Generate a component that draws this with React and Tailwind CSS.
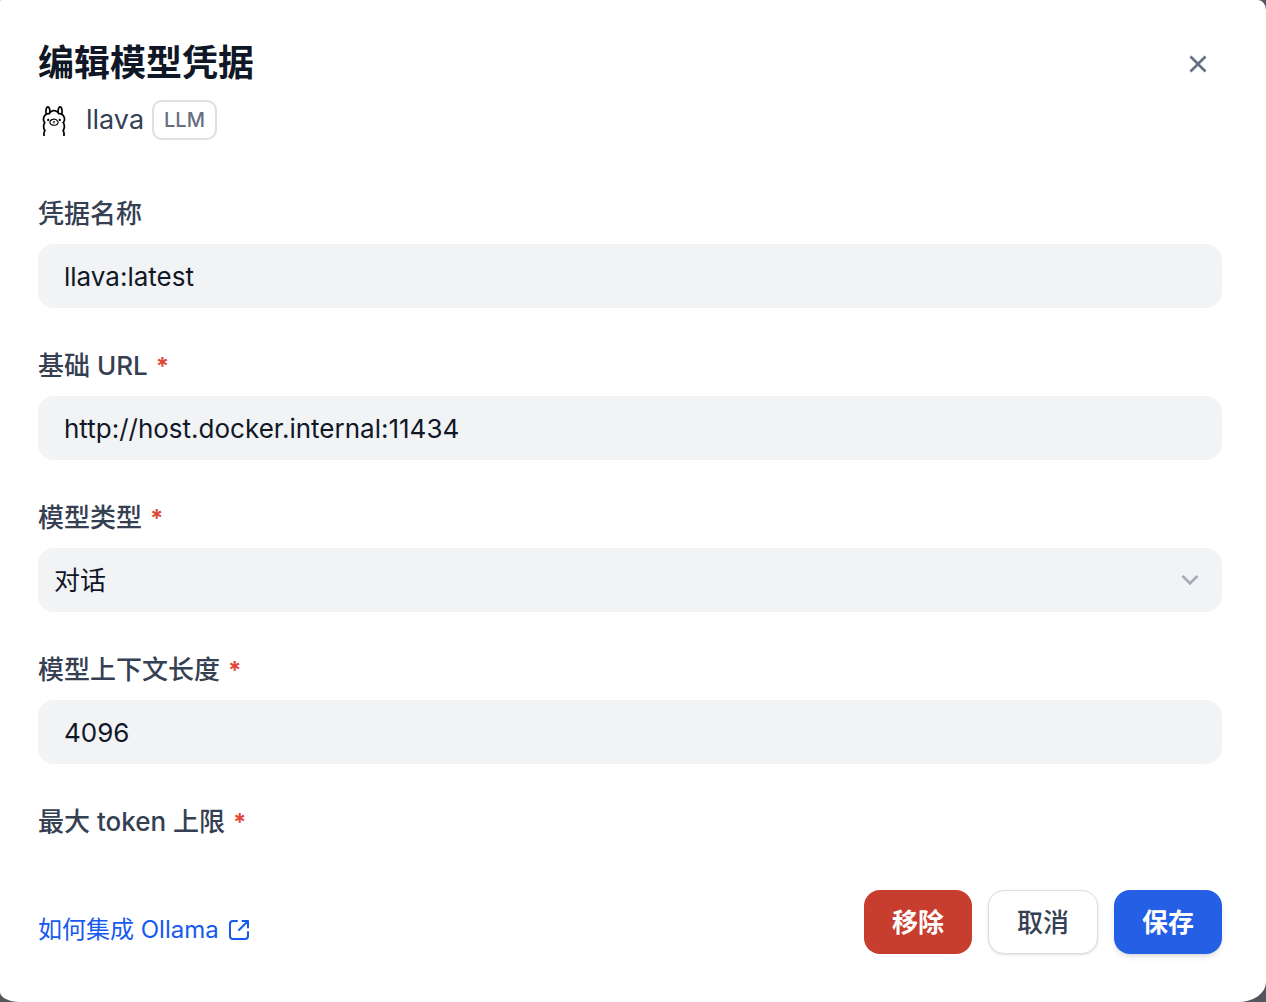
import React from 'react';
import { SiOllama } from 'react-icons/si';
import { RiCloseLine, RiArrowDownSLine } from 'react-icons/ri';

const inputClass =
  'h-16 w-full rounded-2xl bg-[#f2f3f5] text-[26px] text-[#101828] outline-none';

function RequiredMark() {
  return <span className="ml-2 text-[24px] font-bold text-[#e0483a]">*</span>;
}

function Field({ id, label, required, children }) {
  return (
    <div className="flex flex-col gap-2.5">
      <label htmlFor={id} className="h-10 text-[26px] leading-10 font-medium text-[#354052]">
        {label}
        {required && <RequiredMark />}
      </label>
      {children}
    </div>
  );
}

function ExternalIcon() {
  return (
    <svg viewBox="0 0 24 24" className="size-6" fill="none" stroke="currentColor" strokeWidth="2" strokeLinecap="round" strokeLinejoin="round" aria-hidden="true">
      <path d="M10 3H6a3 3 0 0 0-3 3v12a3 3 0 0 0 3 3h12a3 3 0 0 0 3-3v-4" />
      <path d="M15.500 3H21v6.500M21 3l-9 9" />
    </svg>
  );
}

export default function App() {
  return (
    <div className="min-h-screen overflow-hidden bg-[#54565e] font-['Inter','Noto_Sans_CJK_SC',sans-serif]">
      <main className="flex min-h-screen flex-col bg-white pr-11 pl-[38px] [border-radius:1px_8px_28px_20px/1px_10px_20px_10px]">
        <header className="flex items-start justify-between pt-10">
          <div>
            <h1 className="h-12 text-[36px] leading-[46px] font-bold text-[#101828]">编辑模型凭据</h1>
            <div className="mt-3 flex h-10 items-center">
              <span className="flex size-8 items-end justify-center">
                <SiOllama className="size-[30px] text-black" />
              </span>
              <span className="ml-4 text-[27px] leading-10 text-[#354052]">llava</span>
              <span className="ml-2 flex h-10 items-center rounded-[10px] border-2 border-[#dedfe1] px-[10px] text-[20px] font-medium text-[#676f83]">LLM</span>
            </div>
          </div>
          <button type="button" aria-label="关闭" className="mt-1 mr-1 flex size-10 items-center justify-center text-[#676f83]">
            <RiCloseLine className="size-8" />
          </button>
        </header>

        <form className="mt-[54px] flex flex-col gap-[38px]">
          <Field id="name" label="凭据名称">
            <input id="name" type="text" defaultValue="llava:latest" className={`${inputClass} px-[26px]`} />
          </Field>
          <Field id="url" label="基础 URL" required>
            <input id="url" type="text" defaultValue="http://host.docker.internal:11434" className={`${inputClass} px-[26px]`} />
          </Field>
          <Field id="type" label="模型类型" required>
            <div className="relative">
              <select id="type" className={`${inputClass} appearance-none px-4`}>
                <option>对话</option>
              </select>
              <RiArrowDownSLine className="pointer-events-none absolute top-4 right-4 size-8 text-[#a5abb6]" />
            </div>
          </Field>
          <Field id="context" label="模型上下文长度" required>
            <input id="context" type="text" defaultValue="4096" className={`${inputClass} px-[26px]`} />
          </Field>
          <div className="h-10 text-[26px] leading-10 font-medium text-[#354052]">
            最大 token 上限
            <RequiredMark />
          </div>
        </form>

        <footer className="mt-auto flex items-center justify-between pb-12">
          <a href="#ollama" className="mt-4 flex items-center gap-2 text-[24px] leading-9 text-[#155aef]">
            如何集成 Ollama
            <ExternalIcon />
          </a>
          <div className="flex gap-4 text-[26px]">
            <button type="button" className="h-16 rounded-2xl bg-[#c73d2e] px-7 font-bold text-white">移除</button>
            <button type="button" className="h-16 rounded-2xl border border-[#dcdde0] bg-white px-7 font-medium text-[#354052] shadow-sm">取消</button>
            <button type="button" className="h-16 rounded-2xl bg-[#255fe6] px-7 font-bold text-white shadow-md">保存</button>
          </div>
        </footer>
      </main>
    </div>
  );
}
